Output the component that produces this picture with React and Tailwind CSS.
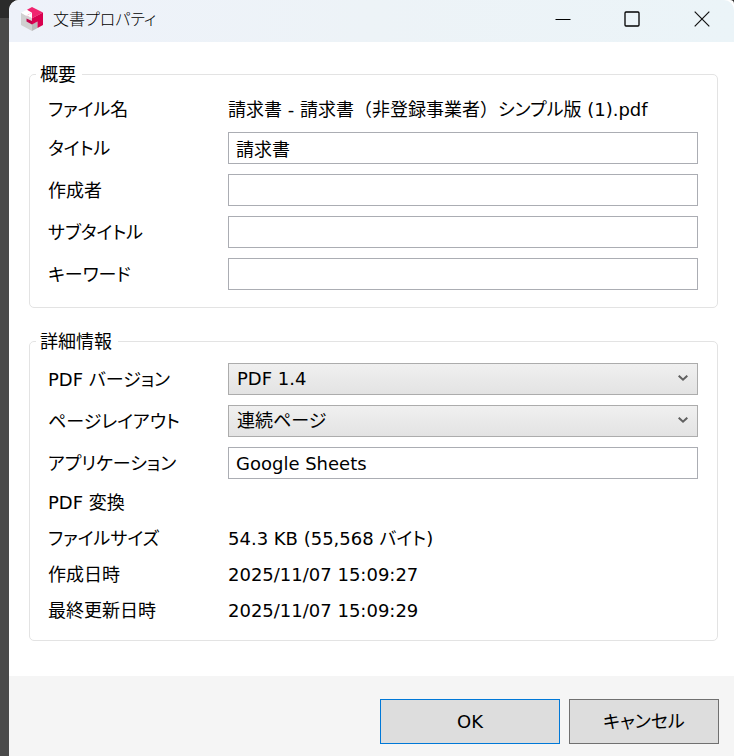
import { useState } from 'react';

const inputClass = 'h-8 w-full border border-[#abadb3] bg-white px-[7px] text-black outline-none';

const Group = ({ title, children }) => (
  <fieldset className="min-w-0 rounded-[5px] border border-[#e3e3e3] pr-[19px] pb-3 pl-[18px]">
    <legend className="-ml-3 h-6 pr-1.5 pl-1 leading-[26px]">{title}</legend>
    <div className="pt-[5px]">{children}</div>
  </fieldset>
);

const InfoRow = ({ label, children }) => (
  <div className="flex h-9 items-center pt-0.5">
    <span className="w-[180px] shrink-0">{label}</span>
    <span className="whitespace-nowrap">{children}</span>
  </div>
);

const FieldRow = ({ id, label, children }) => (
  <div className="flex h-[42px] items-center">
    <label htmlFor={id} className="w-[180px] shrink-0 pt-0.5">{label}</label>
    <div className="relative min-w-0 flex-1">{children}</div>
  </div>
);

const SelectRow = ({ id, label, value, options, onChange }) => (
  <FieldRow id={id} label={label}>
    <select
      id={id}
      name={id}
      value={value}
      onChange={onChange}
      className="block h-8 w-full appearance-none border border-[#acacac] bg-linear-to-b from-[#f0f0f0] to-[#e3e3e3] pl-2 text-black outline-none"
    >
      {options.map((option) => (
        <option key={option}>{option}</option>
      ))}
    </select>
    <svg className="pointer-events-none absolute top-3 right-2.5 h-2 w-2.5" viewBox="0 0 10 8" fill="none" stroke="#606060" strokeWidth="2">
      <path d="M0.7 0.7 5 4.7 9.3 0.7" />
    </svg>
  </FieldRow>
);

const AppLogo = () => (
  <svg className="h-6 w-[22px]" viewBox="0 0 22 24">
    <path d="M0 5.8 11 11.5V24L0 18Z" fill="#d0d0d0" />
    <path d="M11 17 16.5 14.5V21L11 24Z" fill="#b9b9b9" />
    <path d="M0 5.8 6 2.8 11 5.6 10.5 7.3 5.5 9Z" fill="#ffffff" />
    <path d="M11 0 22 5.6 11 11.3 5.5 8.6 11 5.8 6 2.8Z" fill="#f0246f" />
    <path d="M11 11.3 22 5.6V18L16.5 21V14.6L11 17.5Z" fill="#d9004f" />
    <path d="M5.5 11.5 11 14V17.5L5.5 14.6Z" fill="#c2004a" />
    <path d="M5.5 8.6 11 5.8V11.3Z" fill="#ffffff" />
  </svg>
);

const TitleBar = () => (
  <header className="flex h-[42px] items-center rounded-t-[10px] bg-linear-to-r from-[#eef2fa] via-[#edf3f7] to-[#ebf4f8] pb-1 pl-3">
    <AppLogo />
    <h1 className="ml-2.5 flex-1 pt-0.5 text-base font-light">文書プロパティ</h1>
    <button type="button" aria-label="最小化" className="flex h-9 w-[69px] items-center justify-center">
      <svg width="16" height="16" viewBox="0 0 16 16" stroke="#000"><path d="M0.5 8.5h15" /></svg>
    </button>
    <button type="button" aria-label="最大化" className="flex h-9 w-[69px] items-center justify-center">
      <svg width="16" height="16" viewBox="0 0 16 16" fill="none" stroke="#000" strokeWidth="1.3">
        <rect x="1" y="1" width="14" height="14" rx="1" />
      </svg>
    </button>
    <button type="button" aria-label="閉じる" className="flex h-9 w-[68px] items-center justify-center pl-1">
      <svg width="16" height="16" viewBox="0 0 16 16" stroke="#111" strokeWidth="1.2"><path d="m0.7 0.7 14.6 14.6M15.3 0.7 0.7 15.3" /></svg>
    </button>
  </header>
);

const App = () => {
  const [form, setForm] = useState({
    title: '請求書',
    author: '',
    subtitle: '',
    keywords: '',
    version: 'PDF 1.4',
    layout: '連続ページ',
    application: 'Google Sheets',
  });

  const update = (event) => setForm({ ...form, [event.target.name]: event.target.value });

  const textField = (name, label) => (
    <FieldRow id={name} label={label}>
      <input id={name} name={name} type="text" value={form[name]} onChange={update} className={`block ${inputClass}`} />
    </FieldRow>
  );

  return (
    <div className="min-h-screen bg-[linear-gradient(to_bottom,#2b2b2b_18px,#4a4a4a_18px)] pl-[9px] font-['DejaVu_Sans','Noto_Sans_CJK_JP',sans-serif] text-[18px] leading-6 text-black [font-feature-settings:'palt']">
      <form className="flex min-h-screen flex-col rounded-tl-[10px] rounded-tr-sm bg-white" onSubmit={(e) => e.preventDefault()}>
        <TitleBar />
        <main className="flex flex-col gap-[21px] pt-5 pr-4 pb-[35px] pl-5">
          <Group title="概要">
            <InfoRow label="ファイル名">
              請求書 - <span className="[font-feature-settings:normal]">請求書（非登録事業者）</span>シンプル版 (1).pdf
            </InfoRow>
            {textField('title', 'タイトル')}
            {textField('author', '作成者')}
            {textField('subtitle', 'サブタイトル')}
            {textField('keywords', 'キーワード')}
          </Group>
          <Group title="詳細情報">
            <SelectRow id="version" label="PDF バージョン" value={form.version} onChange={update} options={['PDF 1.4', 'PDF 1.5', 'PDF 1.6', 'PDF 1.7']} />
            <SelectRow id="layout" label="ページレイアウト" value={form.layout} onChange={update} options={['連続ページ', '単一ページ', '見開きページ']} />
            {textField('application', 'アプリケーション')}
            <InfoRow label="PDF 変換" />
            <InfoRow label="ファイルサイズ">54.3 KB (55,568 バイト)</InfoRow>
            <InfoRow label="作成日時">2025/11/07 15:09:27</InfoRow>
            <InfoRow label="最終更新日時">2025/11/07 15:09:29</InfoRow>
          </Group>
        </main>
        <footer className="flex flex-1 items-start justify-end gap-[9px] bg-[#f5f5f5] pt-[23px] pr-[15px] pb-3">
          <button type="submit" className="h-[45px] w-[180px] border border-[#0078d7] bg-[#dddddd]">OK</button>
          <button type="button" className="h-[45px] w-[150px] border border-[#707070] bg-[#dddddd]">キャンセル</button>
        </footer>
      </form>
    </div>
  );
};

export default App;
